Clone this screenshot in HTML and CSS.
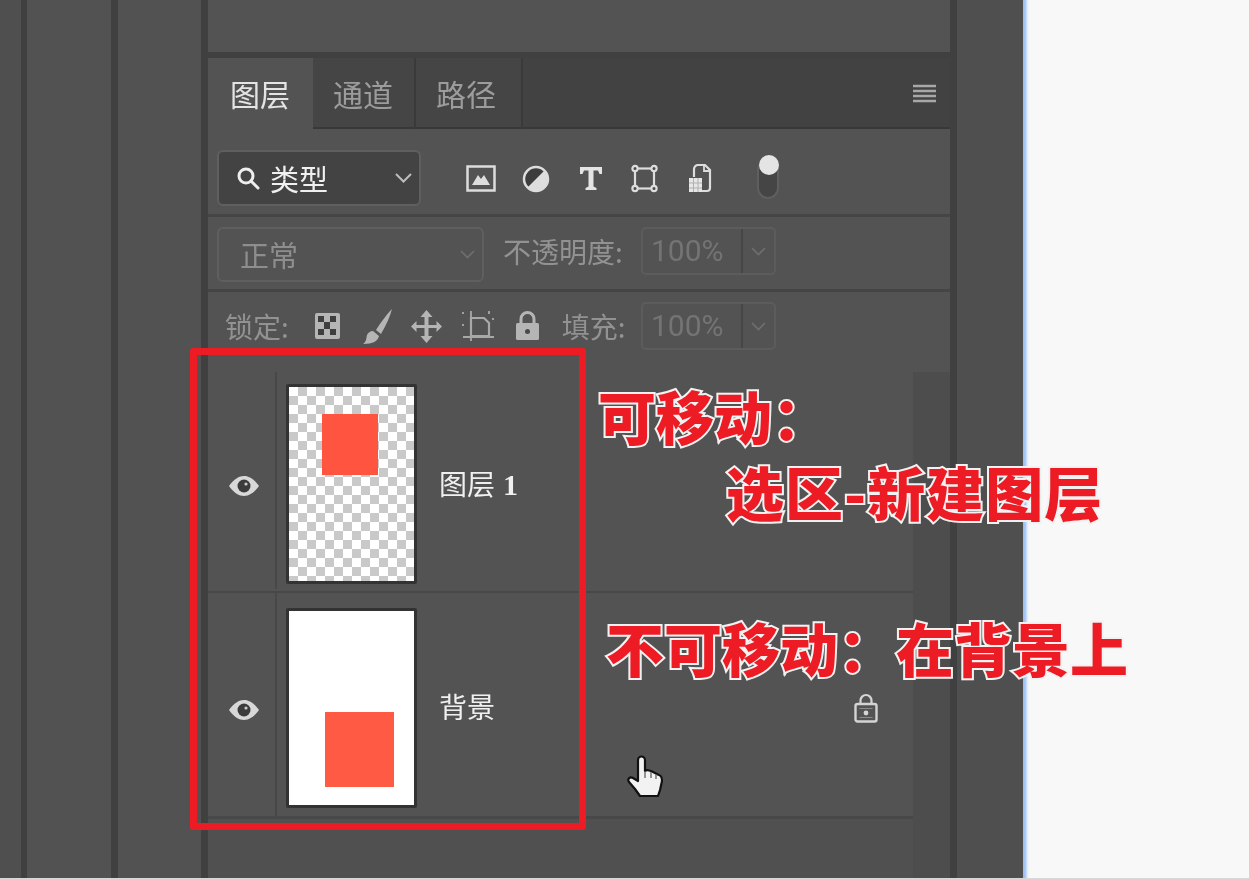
FILE: index.html
```html
<!DOCTYPE html>
<html lang="zh-CN">
<head>
  <meta charset="UTF-8">
  <meta name="viewport" content="width=device-width, initial-scale=1.0">
  <title>图层</title>
  <link rel="stylesheet" href="styles.css">
</head>
<body>
  <div class="stage">
    <div class="workspace">
      <div class="dock dock-a"></div>
      <div class="dock dock-b"></div>
      <div class="dock dock-c"></div>

      <div class="panel">
        <div class="panel-top"></div>

        <div class="tabs">
          <div class="tab active">图层</div>
          <div class="tab t2">通道</div>
          <div class="tab t3">路径</div>
          <svg class="menu-icon" width="23" height="21" viewBox="0 0 23 21">
            <path d="M0 3h23M0 8h23M0 13h23M0 18h23" stroke="#a8a8a8" stroke-width="2.6"/>
          </svg>
        </div>

        <div class="row filter-row">
          <div class="combo kind">
            <svg width="24" height="26" viewBox="0 0 24 26" fill="none" stroke="#eee" stroke-width="3">
              <circle cx="10" cy="11" r="7"/>
              <path d="M15 16l7 7" stroke-linecap="round"/>
            </svg>
            <span class="kind-label">类型</span>
            <svg class="chev" width="17" height="10" viewBox="0 0 17 10" fill="none" stroke="#bdbdbd" stroke-width="2">
              <path d="M1 1l7.500 7.500L16 1"/>
            </svg>
          </div>
          <div class="filter-icons">
            <svg width="30" height="27" viewBox="0 0 30 27">
              <rect x="1.500" y="1.500" width="27" height="24" fill="none" stroke="#ddd" stroke-width="2.500"/>
              <path d="M6 20l6-10 3 4 3-4 6 10z" fill="#ddd"/>
            </svg>
            <svg width="28" height="28" viewBox="0 0 28 28">
              <circle cx="14" cy="14" r="12" fill="#3d3d3d" stroke="#ddd" stroke-width="2.500"/>
              <path d="M22.500 5.500A12 12 0 0 1 5.500 22.500z" fill="#ddd"/>
            </svg>
            <svg width="24" height="25" viewBox="0 0 24 25">
              <path d="M1 1h22v7h-2.500l-1.500-3.500h-4.500v16l3 1.500v2H6.500v-2l3-1.500v-16H5L3.500 8H1z" fill="#e4e4e4"/>
            </svg>
            <svg width="27" height="29" viewBox="0 0 27 29" fill="#4a4a4a" stroke="#ddd" stroke-width="2.200">
              <rect x="4" y="4.500" width="19" height="20" fill="none"/>
              <circle cx="4" cy="4.500" r="2.600"/><circle cx="23" cy="4.500" r="2.600"/>
              <circle cx="4" cy="24.500" r="2.600"/><circle cx="23" cy="24.500" r="2.600"/>
            </svg>
            <svg width="24" height="31" viewBox="0 0 24 31">
              <path d="M6 14V6a4 4 0 0 1 4-4h7l5 5v18a3 3 0 0 1-3 3h-5" fill="none" stroke="#ddd" stroke-width="2.200"/>
              <path d="M16 2v6h6" fill="none" stroke="#ddd" stroke-width="1.800"/>
              <rect x="1" y="15" width="13" height="14" fill="#e6e6e6"/>
              <path d="M1 20h13M1 25h13M5.500 15v14M10 15v14" stroke="#b0b0b0"/>
            </svg>
          </div>
          <div class="toggle"><span class="knob"></span></div>
        </div>

        <div class="row blend-row">
          <div class="combo blend">
            <span>正常</span>
            <svg class="chev" width="15" height="9" viewBox="0 0 15 9" fill="none" stroke="#6f6f6f" stroke-width="1.600">
              <path d="M1 1l6.500 6.500L14 1"/>
            </svg>
          </div>
          <span class="dim-label opacity-label">不透明度:</span>
          <div class="field">
            <span class="field-value">100%</span>
            <span class="field-arrow">
              <svg width="15" height="9" viewBox="0 0 15 9" fill="none" stroke="#6f6f6f" stroke-width="1.600">
                <path d="M1 1l6.500 6.500L14 1"/>
              </svg>
            </span>
          </div>
        </div>

        <div class="row lock-row">
          <span class="dim-label lock-label">锁定:</span>
          <div class="lock-icons">
            <svg width="27" height="28" viewBox="0 0 27 28">
              <rect x="1" y="1" width="25" height="26" rx="2" fill="#b5b5b5"/>
              <path d="M4 4h6v6H4zM16 4h6v6h-6zM10 10h6v7h-6zM4 17h6v6H4zM16 17h6v6h-6z" fill="#3e3e3e"/>
            </svg>
            <svg class="brush" width="32" height="36" viewBox="0 0 32 36">
              <path d="M31 1C26 6 20 14 15 22l5 4C25 17 29 9 31 1z" fill="#b5b5b5"/>
              <path d="M12 23l6 5c-1 5-6 8-16 8 4-3 3-6 4-9 1-2 3-4 6-4z" fill="#b5b5b5"/>
            </svg>
            <svg width="31" height="33" viewBox="0 0 31 33" fill="#b5b5b5">
              <path d="M15.500 0l6 7h-4v8h8v-4l5.500 5.500-5.500 5.500v-4h-8v8h4l-6 7-6-7h4v-8h-8v4L0 16.500 5.500 11v4h8V7h-4z"/>
            </svg>
            <svg width="33" height="32" viewBox="0 0 33 32" fill="none" stroke="#a8a8a8" stroke-width="2.200">
              <path d="M9 8h13l5 5v13H9z"/>
              <path d="M1 2v2M1 14v2M1 27h31M9 1v30M27 1v3M31 8v2" stroke-width="1.800"/>
            </svg>
            <svg width="25" height="30" viewBox="0 0 25 30">
              <path d="M6 13V8a6.500 6.500 0 0 1 13 0v5" fill="none" stroke="#b5b5b5" stroke-width="3"/>
              <rect x="1" y="12" width="23" height="17" rx="1.500" fill="#b5b5b5"/>
              <circle cx="12.500" cy="20.500" r="2.500" fill="#4a4a4a"/>
            </svg>
          </div>
          <span class="dim-label fill-label">填充:</span>
          <div class="field">
            <span class="field-value">100%</span>
            <span class="field-arrow">
              <svg width="15" height="9" viewBox="0 0 15 9" fill="none" stroke="#6f6f6f" stroke-width="1.600">
                <path d="M1 1l6.500 6.500L14 1"/>
              </svg>
            </span>
          </div>
        </div>

        <div class="layers">
          <div class="layer-list">
            <div class="layer first">
              <div class="eye-col">
                <svg width="30" height="20" viewBox="0 0 30 20">
                  <path d="M0 10C5 3 10 0 15 0s10 3 15 10c-5 7-10 10-15 10S5 17 0 10z" fill="#d8d8d8"/>
                  <circle cx="15" cy="10" r="6.500" fill="#3c3c3c"/>
                  <circle cx="17" cy="8" r="1.600" fill="#ccc"/>
                </svg>
              </div>
              <div class="thumb checker"><div class="shape shape-top"></div></div>
              <span class="layer-name">图层<span class="num">1</span></span>
            </div>
            <div class="layer second">
              <div class="eye-col">
                <svg width="30" height="20" viewBox="0 0 30 20">
                  <path d="M0 10C5 3 10 0 15 0s10 3 15 10c-5 7-10 10-15 10S5 17 0 10z" fill="#d8d8d8"/>
                  <circle cx="15" cy="10" r="6.500" fill="#3c3c3c"/>
                  <circle cx="17" cy="8" r="1.600" fill="#ccc"/>
                </svg>
              </div>
              <div class="thumb plain"><div class="shape shape-bottom"></div></div>
              <span class="layer-name bg-name">背景</span>
              <svg class="layer-lock" width="24" height="30" viewBox="0 0 24 30">
                <path d="M6.500 11V7.500a5.500 5.500 0 0 1 11 0V11" fill="none" stroke="#d4d4d4" stroke-width="2.200"/>
                <rect x="1.500" y="11" width="21" height="17.500" rx="2" fill="none" stroke="#d4d4d4" stroke-width="2.400"/>
                <path d="M5.500 15.500h13M5.500 24.500h13" stroke="#8c8c8c" stroke-width="1"/>
                <circle cx="12" cy="20" r="2.400" fill="#d4d4d4"/>
              </svg>
            </div>
          </div>
          <div class="scroll-track"></div>
        </div>
      </div>

      <div class="dock dock-d"></div>
      <div class="page-edge"></div>
    </div>

    <!-- 标注 -->
    <div class="mark-box"></div>
    <div class="note note-a">可移动：</div>
    <div class="note note-b">选区-新建图层</div>
    <div class="note note-c">不可移动：在背景上</div>
    <svg class="cursor" width="38" height="44" viewBox="0 0 38 44">
      <path d="M11 26V5a3.500 3.500 0 0 1 7 0v11l2-1 4 1 4 2 4 2c3 1 3 4 3 6l-2 9-2 6H13l-5-7-6-7c-2-3 1-6 4-4z" fill="#f2f2f2" stroke="#111" stroke-width="2.200" stroke-linejoin="round"/>
      <path d="M18 16v7M24 17v6M29 19v5" stroke="#555" stroke-width="1.200"/>
    </svg>
  </div>
</body>
</html>
```
FILE: styles.css
```css
:root {
  --panel: #535353;
  --line: #404040;
  --side: #4f4f4f;
  --red: #ed1c24;
}

* {
  box-sizing: border-box;
}

body {
  margin: 0;
  background: #d8d8d8;
  font-family: "Noto Sans CJK SC", "Noto Sans", sans-serif;
}

.stage {
  position: relative;
  width: 1249px;
  height: 878px;
  overflow: hidden;
  background: #f8f8f8;
}

.workspace {
  display: flex;
  height: 100%;
  filter: blur(0.6px);
}

.dock {
  background: var(--side);
  border-right: 7px solid var(--line);
}

.dock-a { width: 27px; border-right-width: 6px; }
.dock-b { width: 91px; background: #525252; }
.dock-c { width: 90px; background: #525252; }
.dock-d { width: 73px; border-right: 0; border-left: 7px solid var(--line); }

.page-edge {
  width: 6px;
  background: linear-gradient(to right, #98bdf5, #a9c9f6 40%, #e4eefb 75%, #f8f8f8);
}

.panel {
  width: 742px;
  display: flex;
  flex-direction: column;
  background: var(--panel);
}

.panel-top {
  height: 58px;
  border-bottom: 6px solid var(--line);
}

/* tabs */
.tabs {
  display: flex;
  align-items: stretch;
  height: 71px;
  position: relative;
  background: #424242;
  box-shadow: inset 0 -2px 0 #383838;
}

.tab {
  width: 103px;
  padding: 14px 0 0 20px;
  font-size: 30px;
  line-height: 42px;
  color: #9c9c9c;
  background: #454545;
  border-right: 2px solid #3a3a3a;
  box-shadow: inset 0 -2px 0 #383838;
}

.tab.active {
  width: 105px;
  padding-left: 22px;
  color: #e4e4e4;
  background: var(--panel);
  border-right: 0;
  box-shadow: none;
}

.tab.t3 { width: 107px; }

.menu-icon {
  margin: 25px 14px 0 auto;
}

/* rows */
.row {
  display: flex;
  align-items: center;
  border-bottom: 3px solid #454545;
}

.filter-row {
  height: 88px;
  padding: 14px 0 0 9px;
}

.blend-row {
  height: 75px;
  padding: 0 0 4px 9px;
}

.lock-row {
  height: 80px;
  padding: 0 0 12px 17px;
  border-bottom: 0;
}

.combo {
  display: flex;
  align-items: center;
  border-radius: 6px;
  border: 2px solid #5f5f5f;
  position: relative;
}

.kind {
  width: 204px;
  height: 56px;
  padding-left: 17px;
  background: #434343;
  margin-top: -1px;
}

.kind-label {
  margin-left: 10px;
  font-size: 29px;
  line-height: 40px;
  color: #f0f0f0;
}

.chev {
  margin-left: auto;
  margin-right: 7px;
}

.filter-icons {
  display: flex;
  align-items: center;
  margin-left: 45px;
  gap: 26px;
}

.filter-icons svg:nth-child(3) { margin-left: 3px; }
.filter-icons svg:nth-child(4) { margin-left: 2px; }
.filter-icons svg:nth-child(5) { margin-left: 4px; }

.toggle {
  position: relative;
  width: 22px;
  height: 40px;
  margin: 0 0 0 45px;
  border-radius: 11px;
  background: #454545;
  border: 2px solid #5f5f5f;
}

.knob {
  position: absolute;
  left: 0;
  top: -6px;
  width: 20px;
  height: 20px;
  border-radius: 50%;
  background: #e4e4e4;
}

.blend {
  width: 267px;
  height: 55px;
  margin-top: 6px;
  padding-left: 21px;
  font-size: 29px;
  color: #8e8e8e;
}

.dim-label {
  font-size: 28px;
  line-height: 40px;
  color: #929292;
  white-space: nowrap;
}

.opacity-label { margin-left: 19px; }

.field {
  display: flex;
  height: 48px;
  width: 135px;
  margin-left: auto;
  border: 2px solid #5c5c5c;
  border-radius: 5px;
  margin-right: 174px;
}

.field-value {
  width: 100px;
  padding-left: 8px;
  font-family: Roboto, sans-serif;
  font-size: 30px;
  line-height: 44px;
  color: #747474;
  border-right: 2px solid #464646;
}

.field-arrow {
  display: flex;
  flex: 1;
  align-items: center;
  justify-content: center;
}

.lock-icons {
  display: flex;
  align-items: center;
  gap: 20px;
  margin-left: 25px;
}

.lock-icons .brush { margin-right: -2px; }

.fill-label { margin-left: 22px; }

/* layer list */
.layers {
  display: flex;
  flex: 1;
}

.layer-list {
  width: 705px;
  background: #505050;
}

.layer {
  display: flex;
  align-items: center;
  background: var(--panel);
  border-bottom: 2px solid #484848;
}

.layer.first { height: 221px; padding-bottom: 2px; }
.layer.second { height: 226px; border-bottom: 3px solid #484848; }

.eye-col {
  display: flex;
  align-items: center;
  justify-content: center;
  align-self: stretch;
  width: 69px;
  padding-left: 4px;
  border-right: 2px solid #484848;
}

.eye-col svg { margin-top: 10px; }

.thumb {
  width: 131px;
  height: 200px;
  margin: 6px 0 0 9px;
  border: 3px solid #333;
  border-radius: 2px;
}

.checker {
  background-color: #fff;
  background-image: conic-gradient(#c9c9c9 25%, #fff 0 50%, #c9c9c9 0 75%, #fff 0);
  background-size: 18px 18px;
  padding: 27px 0 0 33px;
}

.plain {
  background: #fff;
  padding: 101px 0 0 36px;
}

.shape {
  background: #ff5540;
}

.shape-top { width: 56px; height: 61px; }
.shape-bottom { width: 69px; height: 75px; background: #ff5a44; }

.layer-name {
  margin: 6px 0 0 22px;
  font-size: 28px;
  line-height: 40px;
  color: #f0f0f0;
}

.bg-name { margin-top: 2px; }

.num {
  margin-left: 8px;
  font-family: "Liberation Serif", serif;
  font-size: 30px;
  font-weight: 700;
}

.layer-lock {
  margin: 6px 35px 0 auto;
}

.scroll-track {
  flex: 1;
  background: #4d4d4d;
}

/* annotations on top of the panel */
.mark-box {
  position: absolute;
  left: 190px;
  top: 348px;
  width: 396px;
  height: 482px;
  border: 7px solid var(--red);
  border-radius: 3px;
}

.note {
  position: absolute;
  font-size: 58px;
  font-weight: 900;
  line-height: 70px;
  white-space: nowrap;
  color: var(--red);
  -webkit-text-stroke: 4px #f2f2f2;
  paint-order: stroke fill;
}

.note-a { left: 598px; top: 380px; }
.note-b { left: 726px; top: 456px; letter-spacing: 1px; }
.note-c { left: 606px; top: 612px; }

.cursor {
  position: absolute;
  left: 627px;
  top: 755px;
}
```
